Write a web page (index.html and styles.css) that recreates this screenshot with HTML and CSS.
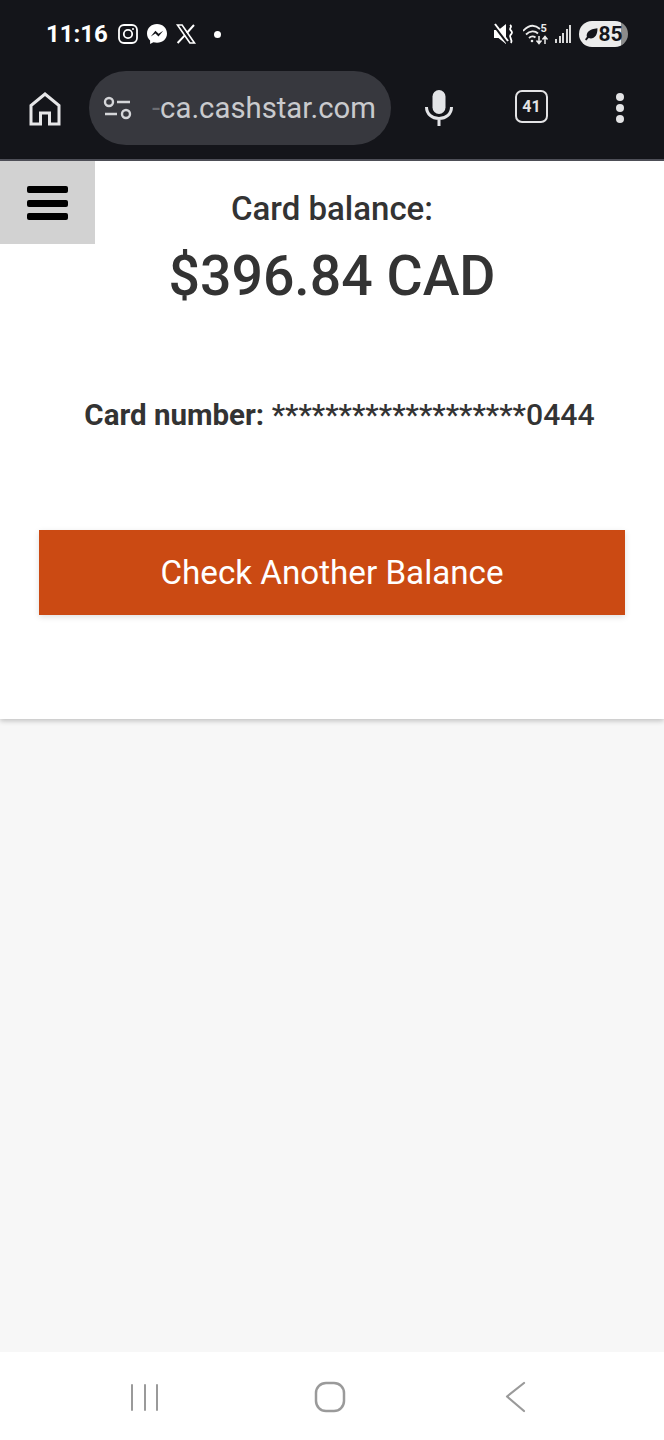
FILE: index.html
```html
<!DOCTYPE html>
<html lang="en">
<head>
  <meta charset="UTF-8">
  <meta name="viewport" content="width=device-width, initial-scale=1.0">
  <title>Card balance</title>
  <link rel="stylesheet" href="styles.css">
</head>
<body>

<div class="chrome">
  <div class="status-bar">
    <div class="status-left">
      <span class="clock">11:16</span>
      <svg class="notif" width="22" height="22" viewBox="0 0 22 22" fill="none" stroke="#fff" stroke-width="1.8">
        <rect x="2" y="2" width="18" height="18" rx="5"/>
        <circle cx="11" cy="11" r="4.2"/>
        <circle cx="16" cy="6" r="1" fill="#fff" stroke="none"/>
      </svg>
      <svg class="notif" width="22" height="22" viewBox="0 0 22 22">
        <path d="M11 1C5.300 1 1 5 1 10.400c0 2.900 1.200 5.300 3.100 7V21l3.300-1.800c1.100.3 2.300.5 3.600.5 5.700 0 10-4 10-9.300S16.700 1 11 1z" fill="#fff"/>
        <path d="M4.800 13.500l4.600-5.800 3.200 3 4.600-3-4.700 5.800-3.100-3z" fill="#14151a"/>
      </svg>
      <svg class="notif" width="22" height="22" viewBox="0 0 22 22" fill="none" stroke="#fff">
        <path d="M2.500 2h4.600l12.400 18h-4.600z" stroke-width="1.600"/>
        <path d="M19 2l-7.200 8M9.800 12.400L2.600 20" stroke-width="2"/>
      </svg>
      <span class="notif-dot"></span>
    </div>
    <div class="status-right">
      <svg width="21" height="22" viewBox="0 0 21 22">
        <path d="M0 7h4.500L12 1v20l-7.500-6H0z" fill="#fff"/>
        <path d="M0 2l13 17" stroke="#14151a" stroke-width="3"/>
        <path d="M1 1l13 17" stroke="#fff" stroke-width="2"/>
        <path d="M16 2c3 2-1.500 3 .5 5s2 3 0 5 2.500 4 .5 8" fill="none" stroke="#fff" stroke-width="1.800"/>
      </svg>
      <svg class="wifi" width="26" height="22" viewBox="0 0 26 22" fill="none" stroke="#ececec" stroke-width="1.800">
        <path d="M0 8c6-6.500 12-6.500 17-2"/>
        <path d="M3 11.500c4-4 9-4 12-1"/>
        <path d="M6 15c2-2 4.500-2 6.500-.5"/>
        <circle cx="9" cy="18" r="1.300" fill="#ececec" stroke="none"/>
        <path d="M16 13v7M13.500 17.500l2.500 3 2.500-3M22 21v-7M19.500 16.500l2.500-3 2.500 3" stroke-width="1.500"/>
        <text x="17.500" y="9" class="wifi-five">5</text>
      </svg>
      <div class="signal">
        <i class="s1"></i><i class="s2"></i><i class="s3"></i><i class="s4"></i><i class="s5"></i>
      </div>
      <div class="battery">
        <svg width="14" height="14" viewBox="0 0 12 12"><path d="M1 11c0-1 1-2 1.500-2.500C1.500 5 4.500 1.500 11.500 1c.3 6-3 10-7.500 8.500L2 11.500z" fill="#14151a"/></svg>
        <span>85</span>
      </div>
    </div>
  </div>

  <div class="toolbar">
    <svg class="home-icon" width="34" height="36" viewBox="0 0 34 36" fill="none" stroke="#e6e6e8" stroke-width="3">
      <path d="M3 33V14.500L17 3l14 11.500V33h-9.500V22h-9v11z"/>
    </svg>
    <div class="omnibox">
      <svg width="30" height="24" viewBox="0 0 30 24" fill="none" stroke="#d5d6d9" stroke-width="2.400">
        <circle cx="6" cy="6" r="4"/>
        <path d="M14 6h13M2 18h12"/>
        <circle cx="23" cy="18" r="4"/>
      </svg>
      <span class="url"><span class="url-fade">-</span>ca.cashstar.com</span>
    </div>
    <svg class="mic-icon" width="30" height="38" viewBox="0 0 30 38" fill="none">
      <rect x="8.500" y="1" width="13" height="24" rx="6.500" fill="#e3e4e7"/>
      <path d="M2.500 18c0 7 5.500 11.500 12.500 11.500S27.500 25 27.500 18M15 29v8" stroke="#e3e4e7" stroke-width="3"/>
    </svg>
    <div class="tab-count">41</div>
    <div class="menu-dots"><i></i><i></i><i></i></div>
  </div>
</div>

<div class="page">
  <div class="card">
    <button class="hamburger" aria-label="Menu"><i></i><i></i><i></i></button>
    <div class="balance-label">Card balance:</div>
    <div class="balance-value">$396.84 CAD</div>
    <div class="card-number"><b>Card number:</b> <span class="masked">*******************0444</span></div>
    <a class="check-btn" href="#">Check Another Balance</a>
  </div>
</div>

<div class="nav-bar">
  <svg width="30" height="28" viewBox="0 0 30 28" stroke="#9a9a9a" stroke-width="2" stroke-linecap="round">
    <path d="M2 2v25M15 2v25M27 2v25"/>
  </svg>
  <svg class="nav-home" width="32" height="32" viewBox="0 0 32 32" fill="none" stroke="#9a9a9a" stroke-width="2.500">
    <rect x="2" y="2" width="28" height="28" rx="10"/>
  </svg>
  <svg class="nav-back" width="22" height="32" viewBox="0 0 22 32" fill="none" stroke="#9a9a9a" stroke-width="2.200" stroke-linecap="round" stroke-linejoin="round">
    <path d="M19 2L2 15.500 19 30"/>
  </svg>
</div>

</body>
</html>
```

FILE: styles.css
```css
:root {
  --dark: #14151a;
  --text: #333;
  --accent: #cb4a13;
  --page-bg: #f7f7f7;
}

html, body {
  margin: 0;
  padding: 0;
}

body {
  font-family: Roboto, 'Liberation Sans', Arial, sans-serif;
  width: 664px;
  height: 1440px;
  display: flex;
  flex-direction: column;
  background: var(--page-bg);
  overflow: hidden;
}

/* browser top */
.chrome {
  background: var(--dark);
  height: 159px;
  border-bottom: 2px solid #50515a;
  box-sizing: content-box;
  flex: none;
}

.status-bar {
  height: 68px;
  display: flex;
  justify-content: space-between;
  align-items: center;
  padding: 0 36px 0 46px;
}

.status-left, .status-right {
  display: flex;
  align-items: center;
}

.clock {
  color: #fff;
  font-size: 24px;
  font-weight: 700;
  width: 71px;
}

.notif {
  margin-right: 7px;
}

.notif-dot {
  width: 7px;
  height: 7px;
  border-radius: 50%;
  background: #fff;
  margin-left: 10px;
}

.status-right svg.wifi {
  margin: 0 6px 0 8px;
}

.wifi-five {
  font: 700 11px Roboto, sans-serif;
  fill: #ececec;
  stroke: none;
}

.signal {
  display: flex;
  align-items: flex-end;
  gap: 1.500px;
  height: 18px;
  margin-right: 8px;
}

.signal i {
  display: block;
  width: 2px;
  background: #d8d8d8;
}

.s1 { height: 4px; }
.s2 { height: 7px; }
.s3 { height: 10px; }
.s4 { height: 14px; }
.s5 { height: 18px; }

.battery {
  width: 49px;
  height: 26px;
  border-radius: 13px;
  background: linear-gradient(90deg, #ececec 85%, #8b8b8b 85%);
  display: flex;
  align-items: center;
  justify-content: center;
  color: #14151a;
  font-size: 21px;
  font-weight: 700;
}

.toolbar {
  height: 91px;
  display: flex;
  align-items: flex-start;
  position: relative;
}

.home-icon {
  margin: 23px 0 0 28px;
}

.omnibox {
  width: 302px;
  height: 74px;
  margin: 3px 0 0 27px;
  border-radius: 37px;
  background: #37383e;
  display: flex;
  align-items: center;
  padding-left: 14px;
  box-sizing: border-box;
  flex: none;
}

.url {
  color: #c9cacd;
  font-size: 29.300px;
  margin-left: 19px;
  white-space: nowrap;
}

.url-fade {
  color: #6c6d72;
}

.mic-icon {
  margin: 21px 0 0 33px;
  flex: none;
}

.tab-count {
  width: 33px;
  height: 33px;
  margin: 22px 0 0 61px;
  border: 2.500px solid #e3e3e5;
  border-radius: 7px;
  box-sizing: border-box;
  color: #e3e3e5;
  font-size: 16px;
  font-weight: 700;
  display: flex;
  align-items: center;
  justify-content: center;
  flex: none;
}

.menu-dots {
  margin: 25px 0 0 68px;
  display: flex;
  flex-direction: column;
  gap: 3px;
}

.menu-dots i {
  display: block;
  width: 8px;
  height: 8px;
  border-radius: 50%;
  background: #e3e3e5;
}

/* balance card */
.page {
  flex: 1;
}

.card {
  position: relative;
  height: 558px;
  background: #fff;
  box-shadow: 0 2px 5px rgba(0,0,0,0.22);
  display: flex;
  flex-direction: column;
  align-items: center;
  color: var(--text);
}

.hamburger {
  position: absolute;
  top: 0;
  left: 0;
  width: 95px;
  height: 83px;
  background: #d2d2d2;
  border: none;
  padding: 25px 0 0 27px;
  display: flex;
  flex-direction: column;
  gap: 6.500px;
  box-sizing: border-box;
}

.hamburger i {
  display: block;
  width: 41px;
  height: 7px;
  border-radius: 2px;
  background: #000;
}

.balance-label {
  margin-top: 29px;
  font-size: 33px;
  font-weight: 500;
  line-height: 38px;
}

.balance-value {
  margin-top: 17px;
  font-size: 55.400px;
  font-weight: 500;
  line-height: 64px;
}

.card-number {
  margin: 89px 0 0 15px;
  font-size: 30.200px;
  font-weight: 500;
  line-height: 34px;
  white-space: nowrap;
}

.card-number b {
  font-size: 29.500px;
  font-weight: 700;
}

.check-btn {
  margin-top: 98px;
  width: 586px;
  height: 85px;
  background: var(--accent);
  box-shadow: 0 2px 6px rgba(0,0,0,0.13);
  color: #fff;
  font-size: 33.200px;
  text-decoration: none;
  display: flex;
  align-items: center;
  justify-content: center;
}

/* android nav buttons */
.nav-bar {
  height: 88px;
  flex: none;
  background: #fff;
  display: flex;
  align-items: center;
  padding: 2px 0 0 130px;
  box-sizing: border-box;
}

.nav-home {
  margin-left: 154px;
}

.nav-back {
  margin-left: 159px;
}
```
